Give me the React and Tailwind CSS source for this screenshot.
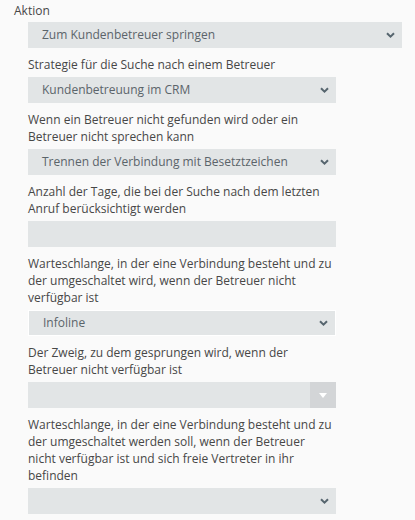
import React from 'react';

const Chevron = () => (
  <svg width="9" height="6" viewBox="0 0 9 6" className="shrink-0">
    <path d="M1 1.2 L4.5 4.6 L8 1.2" fill="none" stroke="#56656e" strokeWidth="2" />
  </svg>
);

const Label = ({ children }) => (
  <div className="mt-2 mb-1 text-[12px] leading-[17px] text-[#474747]">{children}</div>
);

const Select = ({ value, wide, focused }) => (
  <div
    className={
      'flex h-[26px] items-center justify-between bg-[#e2e5e6] pl-[14px] pr-[7px] text-[12px] text-[#5b646a] ' +
      (wide ? 'w-[374px]' : 'w-[308px]') +
      (focused ? ' border border-white pl-[13px] pr-[6px]' : '')
    }
  >
    <span>{value}</span>
    <Chevron />
  </div>
);

const ComboBox = () => (
  <div className="flex h-[26px] w-[308px] items-stretch bg-[#e2e5e6]">
    <div className="flex-1" />
    <div className="flex w-[26px] items-center justify-center bg-[#d3d5d7]">
      <svg width="8" height="5" viewBox="0 0 8 5">
        <path d="M0 0 H8 L4 5 Z" fill="#ffffff" />
      </svg>
    </div>
  </div>
);

export default function App() {
  return (
    <div className="min-h-[520px] bg-[#fafafa] pt-[2px] pl-[14px]" style={{ fontFamily: '"Open Sans", sans-serif' }}>
      <div className="mb-[3px] text-[12px] leading-[17px] text-[#474747]">Aktion</div>
      <div className="pl-[14px]">
        <Select value="Zum Kundenbetreuer springen" wide />

        <Label>Strategie für die Suche nach einem Betreuer</Label>
        <Select value="Kundenbetreuung im CRM" />

        <Label>
          Wenn ein Betreuer nicht gefunden wird oder ein
          <br />
          Betreuer nicht sprechen kann
        </Label>
        <Select value="Trennen der Verbindung mit Besetztzeichen" />

        <Label>
          Anzahl der Tage, die bei der Suche nach dem letzten
          <br />
          Anruf berücksichtigt werden
        </Label>
        <div className="h-[26px] w-[308px] bg-[#e2e5e6]" />

        <Label>
          Warteschlange, in der eine Verbindung besteht und zu
          <br />
          der umgeschaltet wird, wenn der Betreuer nicht
          <br />
          verfügbar ist
        </Label>
        <Select value="Infoline" focused />

        <Label>
          Der Zweig, zu dem gesprungen wird, wenn der
          <br />
          Betreuer nicht verfügbar ist
        </Label>
        <ComboBox />

        <Label>
          Warteschlange, in der eine Verbindung besteht und zu
          <br />
          der umgeschaltet werden soll, wenn der Betreuer
          <br />
          nicht verfügbar ist und sich freie Vertreter in ihr
          <br />
          befinden
        </Label>
        <Select value="" />
      </div>
    </div>
  );
}
